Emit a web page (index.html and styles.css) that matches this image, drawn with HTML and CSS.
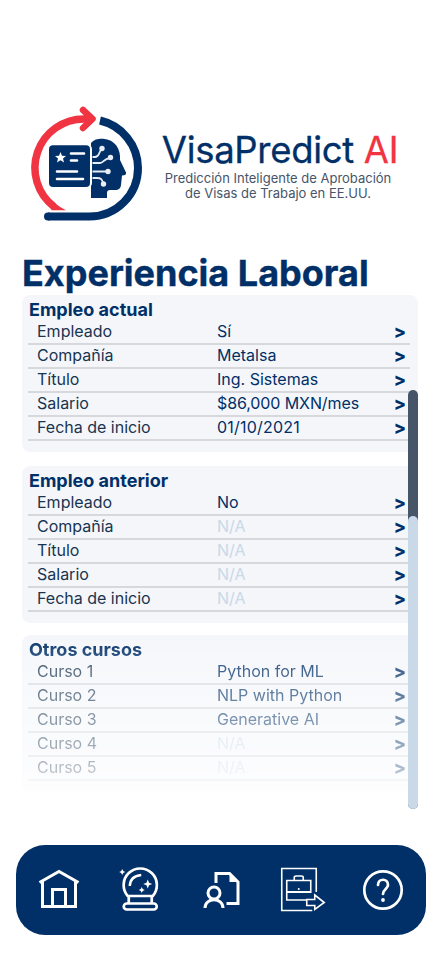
FILE: index.html
```html
<!DOCTYPE html>
<html lang="es">
<head>
<meta charset="utf-8">
<title>VisaPredict AI</title>
<link rel="stylesheet" href="styles.css">
</head>
<body>
<main class="screen">
  <header class="brand">
    <svg class="logo" viewBox="0 0 135 135" fill="none">
      <path d="M80 25.500A49 49 0 0 1 118 73A48.500 48.500 0 0 1 69.500 121.500H28" stroke="#003067" stroke-width="8"/>
      <circle cx="28" cy="121.500" r="4" fill="#003067"/>
      <path d="M70 23.900H64A49 49 0 0 0 34 111.700" stroke="#f03442" stroke-width="7.500"/>
      <path d="M31.500 115.200V114L35.500 108.500Q40 112.500 46 115.200Z" fill="#f03442"/>
      <path d="M63 15L72.500 23.800L63 33" stroke="#f03442" stroke-width="6.500" stroke-linecap="round" stroke-linejoin="round"/>
      <path d="M71 48C74 44 79 43.500 83 43.700C95 44.500 101 54 100 65L106 77.500C106.500 79.500 105 80.500 102 80.500L101 90C100.500 93.500 99 95 95 95H90Q87 95 87 98V103H71Z" fill="#003067"/>
      <rect x="28" y="49.300" width="43" height="43.700" rx="5" fill="#003067" stroke="#fff" stroke-width="2"/>
      <path d="M72.500 62H75C80 62 78 57 82 54M72.500 68H80C84 68 83 64 90 63M72.500 76.500H88M72.500 83H77C82 83 82 85 83.500 89" stroke="#e9edf5" stroke-width="1.800"/>
      <g fill="#e9edf5"><circle cx="82" cy="53.500" r="2.700"/><circle cx="90.500" cy="62.500" r="2.700"/><circle cx="88" cy="76.500" r="2.700"/><circle cx="83.500" cy="89" r="2.700"/></g>
      <path d="M40.500 57L42 60.700L46 61L43 63.500L44 67.500L40.500 65.200L37 67.500L38 63.500L35 61L39 60.700Z" fill="#fff"/>
      <path d="M51 58.500H64M51 65.500H57M37 76.500H57M37 84H63" stroke="#fff" stroke-width="2.600" stroke-linecap="round"/>
    </svg>
    <div class="brand-text">
      <div class="brand-name">VisaPredict <span>AI</span></div>
      <p class="tagline">Predicción Inteligente de Aprobación<br>de Visas de Trabajo en EE.UU.</p>
    </div>
  </header>

  <h1>Experiencia Laboral</h1>

  <div class="sections">
    <section class="card">
      <h2>Empleo actual</h2>
      <div class="row"><span>Empleado</span><span class="value">Sí</span><b>&gt;</b></div>
      <div class="row"><span>Compañía</span><span class="value">Metalsa</span><b>&gt;</b></div>
      <div class="row"><span>Título</span><span class="value">Ing. Sistemas</span><b>&gt;</b></div>
      <div class="row"><span>Salario</span><span class="value amount">$86,000 MXN/mes</span><b>&gt;</b></div>
      <div class="row"><span>Fecha de inicio</span><span class="value date">01/10/2021</span><b>&gt;</b></div>
    </section>
    <section class="card previous">
      <h2>Empleo anterior</h2>
      <div class="row"><span>Empleado</span><span class="value">No</span><b>&gt;</b></div>
      <div class="row"><span>Compañía</span><span class="value empty">N/A</span><b>&gt;</b></div>
      <div class="row"><span>Título</span><span class="value empty">N/A</span><b>&gt;</b></div>
      <div class="row"><span>Salario</span><span class="value empty">N/A</span><b>&gt;</b></div>
      <div class="row"><span>Fecha de inicio</span><span class="value empty">N/A</span><b>&gt;</b></div>
    </section>
    <section class="card courses">
      <h2>Otros cursos</h2>
      <div class="row"><span>Curso 1</span><span class="value">Python for ML</span><b>&gt;</b></div>
      <div class="row"><span>Curso 2</span><span class="value">NLP with Python</span><b>&gt;</b></div>
      <div class="row"><span>Curso 3</span><span class="value">Generative AI</span><b>&gt;</b></div>
      <div class="row"><span>Curso 4</span><span class="value empty">N/A</span><b>&gt;</b></div>
      <div class="row"><span>Curso 5</span><span class="value empty">N/A</span><b>&gt;</b></div>
    </section>
    <div class="scrollbar"><div class="track"></div></div>
  </div>

  <nav class="tabs">
    <svg viewBox="0 0 60 60"><path d="M9.500 22.500L29 11.500L48.500 22.500M12.500 21V46.500H45.500V21M22.500 46V29.500H35.500V46" stroke-width="3"/></svg>
    <svg viewBox="0.750 0 60 60"><path d="M17.500 36A16.600 16.600 0 1 1 42.500 36ZM18.500 36V43M41.500 36V43" stroke-width="2.700"/><rect x="13.500" y="43.500" width="33" height="6" rx="3" stroke-width="2.700"/><path d="M19.500 26Q20 16 31 15" stroke-width="2.500"/><path class="solid" d="M37.500 19.500L38.800 22.700L42 24L38.800 25.300L37.500 28.500L36.200 25.300L33 24L36.200 22.700ZM31.500 27L32.500 29L34.500 30L32.500 31L31.500 33L30.500 31L28.500 30L30.500 29ZM12 9L13 11L15 12L13 13L12 15L11 13L9 12L11 11Z"/></svg>
    <svg viewBox="-3.500 0 60 60"><path d="M20.500 23V13.500H34L42.500 22V43.500H31" stroke-width="3"/><path class="solid" d="M34 12V22H44Z"/><circle cx="18.500" cy="33" r="6" stroke-width="3"/><path d="M9.500 48C9.500 37 27.500 37 27.500 48" stroke-width="3"/></svg>
    <svg viewBox="-0.250 0 60 60"><path d="M44 32V8.500H9.500V50.500H40M34 40H14.500V20.500H38.500V33M22 20V17.500Q22 16 24 16H29Q31 16 31 17.500V20M34.500 39.500H42.500V35L52 42.500L42.500 49.500V45.500H34.500Z" stroke-width="1.600"/><path d="M14.500 32H38.500" stroke-width="2"/><circle class="solid" cx="26.500" cy="29" r="1"/></svg>
    <svg viewBox="0 0 60 60"><circle cx="30" cy="30" r="18.700" stroke-width="2.700"/><path d="M25 25C25 18 35 18 35 25C35 29 30 29 30 34" stroke-width="2.700" stroke-linecap="round"/><circle class="solid" cx="30" cy="40" r="1.900"/></svg>
  </nav>
</main>
</body>
</html>
```
FILE: styles.css
```css
* { box-sizing: border-box; }
body { margin: 0; background: #fff; font-family: Inter, sans-serif; color: #003067; }
.screen { width: 440px; height: 956px; overflow: hidden; padding-top: 95px; }
.brand { display: flex; height: 135px; padding-left: 20px; }
.logo { width: 135px; height: 135px; flex: none; }
.brand-text { width: 246px; padding-top: 37px; text-align: center; }
.brand-name { font-size: 36.500px; line-height: 36px; letter-spacing: -.32px; white-space: nowrap; margin-left: 4px; -webkit-text-stroke: .3px; }
.brand-name span { color: #f03442; }
.tagline { margin: 3px 0 0 0; font-size: 13px; line-height: 15px; color: #465569; white-space: nowrap; }
h1 { margin: 21px 0 0 22px; font-size: 36px; line-height: 44px; white-space: nowrap; -webkit-text-stroke: .4px; }
.sections { position: relative; width: 396px; height: 514px; margin-left: 22px; }
.card { height: 157px; padding: 4px 8px 0 6px; border-radius: 8px; background: #f4f6fa; }
.previous { margin-top: 14px; }
.courses { margin-top: 12px; -webkit-mask-image: linear-gradient(#000 0, rgba(0,0,0,.78) 25px, rgba(0,0,0,.62) 60px, rgba(0,0,0,.33) 132px, rgba(0,0,0,.15) 157px); mask-image: linear-gradient(#000 0, rgba(0,0,0,.78) 25px, rgba(0,0,0,.62) 60px, rgba(0,0,0,.33) 132px, rgba(0,0,0,.15) 157px); }
h2 { margin: 0 0 0 1px; font-size: 18px; line-height: 22px; }
.row { display: grid; grid-template-columns: 180px 1fr auto; height: 24px; padding: 0 4px 0 9px; border-bottom: 2px solid #d6d8db; font-size: 16px; line-height: 20px; color: #19344f; }
.value { color: #003067; white-space: nowrap; }
.amount { letter-spacing: -.1px; }
.date { letter-spacing: .2px; }
.empty { color: #c9d9e8; }
.row b { color: #003067; font-size: 18px; font-weight: 800; line-height: 21px; }
.scrollbar { position: absolute; right: 0; top: 95px; width: 10px; height: 419px; border-radius: 5px; background: #475569; }
.track { height: 293px; margin-top: 126px; border-radius: 5px; background: #c9d9e8; }
.tabs { display: flex; justify-content: space-between; align-items: center; width: 410px; height: 90px; margin: 36px 0 0 16px; padding: 0 13px 0 14px; border-radius: 29px; background: #003067; }
.tabs svg { width: 60px; height: 60px; fill: none; stroke: #fff; }
.tabs .solid { fill: #fff; stroke: none; }
```
